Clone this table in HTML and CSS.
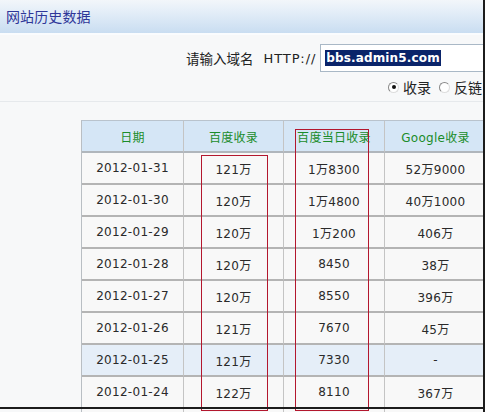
FILE: index.html
```html
<!DOCTYPE html>
<html lang="zh-CN">
<head>
<meta charset="utf-8">
<title>网站历史数据</title>
<link rel="stylesheet" href="styles.css">
</head>
<body>
<div class="frame">
  <div class="titlebar"><h1 class="title">网站历史数据</h1></div>
  <div class="query">
    <div class="domain-row">
      <span class="label">请输入域名</span>
      <span class="proto">HTTP://</span>
      <span class="input"><span class="sel">bbs.admin5.com</span></span>
    </div>
    <div class="radio-row">
      <span class="radio checked"></span><span class="rlabel">收录</span>
      <span class="radio"></span><span class="rlabel">反链</span>
    </div>
  </div>
  <div class="table-wrap">
    <div class="grid">
      <div class="th">日期</div><div class="th">百度收录</div><div class="th">百度当日收录</div><div class="th">Google收录</div>
      <div class="td">2012-01-31</div><div class="td">121万</div><div class="td">1万8300</div><div class="td">52万9000</div>
      <div class="td">2012-01-30</div><div class="td">120万</div><div class="td">1万4800</div><div class="td">40万1000</div>
      <div class="td">2012-01-29</div><div class="td">120万</div><div class="td">1万200</div><div class="td">406万</div>
      <div class="td">2012-01-28</div><div class="td">120万</div><div class="td">8450</div><div class="td">38万</div>
      <div class="td">2012-01-27</div><div class="td">120万</div><div class="td">8550</div><div class="td">396万</div>
      <div class="td">2012-01-26</div><div class="td">121万</div><div class="td">7670</div><div class="td">45万</div>
      <div class="td hl">2012-01-25</div><div class="td hl">121万</div><div class="td hl">7330</div><div class="td hl">-</div>
      <div class="td">2012-01-24</div><div class="td">122万</div><div class="td">8110</div><div class="td">367万</div>
      <div class="td"></div><div class="td"></div><div class="td"></div><div class="td"></div>
    </div>
    <div class="mark mark-a"></div>
    <div class="mark mark-b"></div>
  </div>
  <div class="bottom-edge"></div>
</div>
</body>
</html>
```
FILE: styles.css
```css
html, body {
  margin: 0;
  padding: 0;
  background: #f7f8f9;
  overflow: hidden;
}
.frame {
  position: relative;
  width: 483px;
  height: 412px;
  overflow: hidden;
  border-right: 2px solid #1c1c1c;
  background: #f7f8f9;
  font-family: "DejaVu Sans", "Noto Sans CJK SC", sans-serif;
}
.titlebar {
  height: 33px;
  background: linear-gradient(#f2f6fa 0%, #e4eef8 35%, #c9ddf1 100%);
  border-bottom: 2px solid #fafcfe;
  display: flex;
  align-items: center;
  padding-left: 6px;
}
.title {
  margin: 0;
  font-family: "Noto Sans CJK SC", sans-serif;
  font-weight: normal;
  font-size: 14px;
  color: #2f3799;
  letter-spacing: 0.1px;
  position: relative;
  top: -1px;
}
.query {
  box-sizing: border-box;
  height: 67px;
  padding-top: 9px;
  border-bottom: 1px solid #e6e9ec;
}
.domain-row {
  display: flex;
  align-items: center;
  height: 28px;
  padding-left: 186px;
  white-space: nowrap;
}
.label {
  font-family: "Noto Sans CJK SC", sans-serif;
  font-size: 13.5px;
  color: #222;
}
.proto {
  margin-left: 10px;
  font-family: "DejaVu Sans", sans-serif;
  font-size: 13px;
  letter-spacing: 0.9px;
  color: #222;
}
.input {
  margin-left: 4px;
  flex: none;
  width: 200px;
  height: 26px;
  border: 1px solid #a9b8c6;
  background: #fff;
  display: flex;
  align-items: center;
  padding-left: 4px;
}
.sel {
  background: #0a246a;
  color: #fff;
  font-family: "DejaVu Sans", sans-serif;
  font-weight: bold;
  font-size: 12px;
  line-height: 16px;
  padding: 0 1px;
  letter-spacing: 0.15px;
}
.radio-row {
  display: flex;
  align-items: center;
  height: 18px;
  margin-top: 6px;
  padding-left: 388px;
  white-space: nowrap;
}
.radio {
  flex: none;
  width: 9px;
  height: 9px;
  border-radius: 50%;
  border: 1px solid #888;
  border-right-color: #ddd;
  border-bottom-color: #ddd;
  background: #fff;
  position: relative;
}
.radio.checked::after {
  content: "";
  position: absolute;
  left: 2.5px;
  top: 2.5px;
  width: 4px;
  height: 4px;
  border-radius: 50%;
  background: #111;
}
.rlabel {
  margin-left: 4px;
  margin-right: 8px;
  font-family: "Noto Sans CJK SC", sans-serif;
  font-size: 14px;
  color: #222;
}
.table-wrap {
  position: relative;
  margin-top: 18px;
  margin-left: 81px;
}
.grid {
  display: grid;
  grid-template-columns: 102px 100px 101px 102px;
  border-left: 1px solid #b9bec3;
  border-top: 1px solid #b9c3cd;
  width: max-content;
}
.th, .td {
  box-sizing: border-box;
  height: 32px;
  border-right: 1px solid #c4c4c4;
  border-bottom: 2px solid #b4b4b4;
  display: flex;
  align-items: center;
  justify-content: center;
  font-size: 12px;
  letter-spacing: 0.3px;
  white-space: nowrap;
}
.th {
  background: #d5e6f6;
  color: #1a8c2a;
  font-family: "DejaVu Sans", "Noto Sans CJK SC", sans-serif;
  border-bottom-color: #b0b6bc;
}
.td {
  background: #f8f8f8;
  color: #2a2a2a;
}
.td.hl {
  background: #e5eef8;
}
.mark {
  position: absolute;
  border: 1px solid #b3172e;
  box-sizing: border-box;
}
.mark-a {
  left: 120px;
  top: 35px;
  width: 67px;
  height: 256px;
}
.mark-b {
  left: 214px;
  top: 9px;
  width: 74px;
  height: 282px;
}
.bottom-edge {
  position: absolute;
  left: 0;
  right: 0;
  top: 407px;
  height: 2px;
  background: #1c1c1c;
}
```
